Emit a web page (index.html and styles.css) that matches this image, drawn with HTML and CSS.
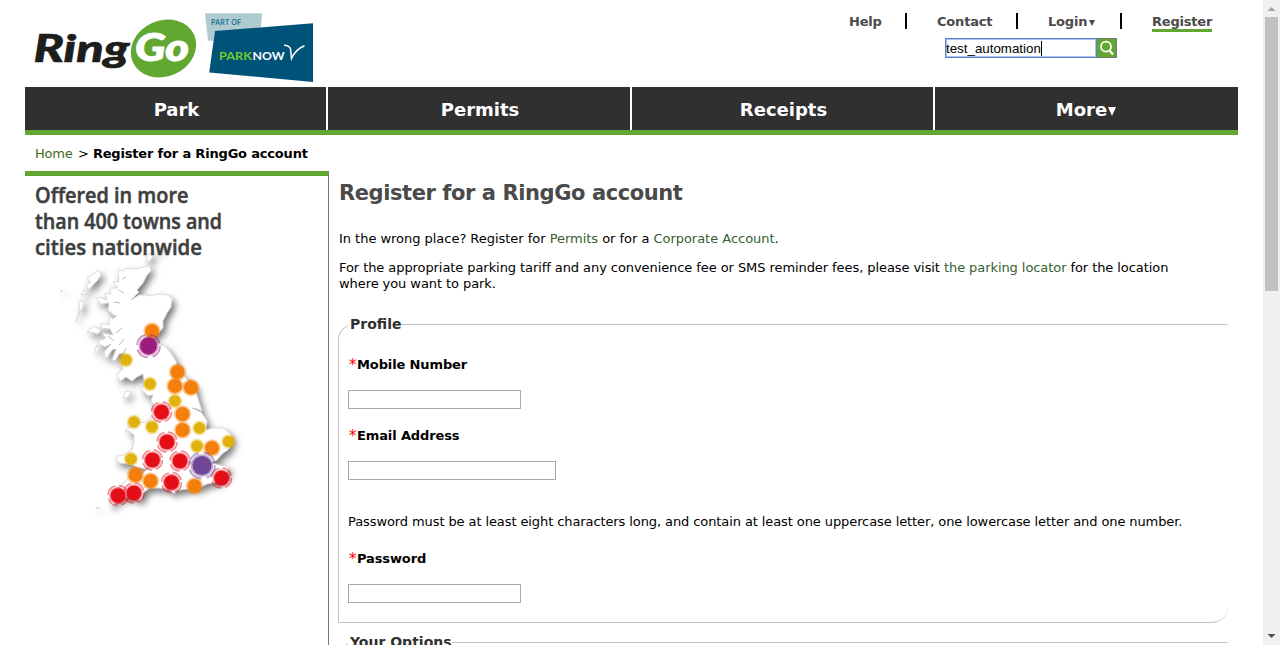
FILE: index.html
```html
<!DOCTYPE html>
<html lang="en">
<head>
<meta charset="utf-8">
<title>Register for a RingGo account</title>
<link rel="stylesheet" href="styles.css">
</head>
<body>
<div class="window">
  <div class="page">
    <header class="header">
      <svg class="logo" width="290" height="87" viewBox="25 0 290 87">
        <text class="logo-ring" x="33.500" y="61.700" textLength="96" lengthAdjust="spacingAndGlyphs">Ring</text>
        <ellipse cx="163.500" cy="48.500" rx="33.500" ry="28" fill="#62a830" transform="rotate(-24 163.500 48.500)"/>
        <text class="logo-go" x="135" y="60.700" textLength="54" lengthAdjust="spacingAndGlyphs">Go</text>
        <path d="M205 13.300L262 13.300L261 27.500L215 32L214 41L208 40.500Z" fill="#afcbd1"/>
        <path d="M215 31L313 23.300V82L209.200 72.500Z" fill="#005378"/>
        <text class="logo-part" x="211" y="24.500" textLength="30">PART OF</text>
        <text class="logo-park" x="219" y="59.500" textLength="33" lengthAdjust="spacingAndGlyphs">PARK</text>
        <text class="logo-now" x="252.500" y="59.500" textLength="32" lengthAdjust="spacingAndGlyphs">NOW</text>
        <path d="M284 45.300Q289.500 45.500 290.500 49L291.500 58.500Q296 49 304.500 45.800" fill="none" stroke="#fff" stroke-width="1.500"/>
      </svg>
      <div class="header-tools">
        <nav class="top-nav">
          <a class="top-link help">Help</a><a class="top-link contact">Contact</a><a class="top-link login">Login<span class="caret"></span></a><a class="top-link register"><span class="current">Register</span></a>
        </nav>
        <div class="search">
          <div class="search-field">test_automation<span class="cursor"></span></div>
          <div class="search-button"><svg width="19" height="18" viewBox="0 0 19 18"><circle cx="9" cy="7.700" r="5" fill="none" stroke="#fff" stroke-width="1.800"/><path d="M12.500 11.500L16 15.500" stroke="#fff" stroke-width="2.200"/></svg></div>
        </div>
      </div>
    </header>
    <nav class="main-nav">
      <a class="tab park">Park</a><a class="tab permits">Permits</a><a class="tab receipts">Receipts</a><a class="tab more">More<span class="caret caret-large"></span></a>
    </nav>
    <div class="crumbs"><a class="home">Home</a><span>&gt;</span><b class="here">Register for a RingGo account</b></div>
    <div class="columns">
      <aside class="sidebar">
        <svg class="map" width="303" height="360" viewBox="25 176 303 360">
          <defs>
            <filter id="shade" x="-20%" y="-20%" width="150%" height="150%"><feDropShadow dx="3" dy="4" stdDeviation="3.500" flood-color="#000" flood-opacity=".55"/></filter>
            <filter id="soft" x="-30%" y="-30%" width="160%" height="160%"><feGaussianBlur stdDeviation=".6"/></filter>
            <g id="small"><circle r="7.400" opacity=".35"/><circle r="5.800"/></g>
            <g id="medium"><circle r="8.700" opacity=".4"/><circle r="7"/></g>
            <g id="large"><circle r="10" fill="none" stroke="currentColor" stroke-width="1.500" opacity=".5" stroke-dasharray="12 4"/><circle r="8.700" opacity=".45"/><circle r="7.300"/></g>
          </defs>
          <g filter="url(#shade)" fill="#fff" stroke="#bbb" stroke-width=".5">
            <path d="M118 270L123 271L127 268L134 269L150 266L151 271L147 275L143 283L137 290L139 292L131 300L139 295L145 295L150 296L159 294L168 295L172 299L171 307L167 313L163 321L163 328L156 336L148 342L157 344L165 346L171 353L176 361L178 371L186 378L192 384L197 387L196 392L202 411L197 409L192 408L201 412L207 421L206 430L213 428L223 428L231 434L233 441L229 449L222 454L217 460L211 463L220 465L229 467L226 476L217 482L207 484L199 488L189 489L178 490L174 493L168 489L158 488L150 488L144 492L141 501L135 498L126 497L119 499L112 506L109 503L117 494L119 487L126 481L132 474L142 474L151 466L145 469L137 467L130 464L120 463L116 460L117 456L124 455L132 450L134 443L134 435L129 431L125 431L132 426L129 421L138 423L147 422L151 419L154 406L151 400L153 395L148 396L142 390L144 382L143 374L137 377L132 381L126 377L120 381L117 375L123 369L121 361L124 353L119 354L115 361L112 360L116 349L112 350L106 359L104 352L111 344L105 347L97 342L106 338L102 333L113 335L110 329L101 328L102 323L109 325L109 318L116 317L108 310L109 303L101 304L96 298L99 297L107 300L105 293L111 294L110 288L118 288L113 282L119 282Z"/>
            <path d="M99 270L101 275L97 281L92 286L88 290L86 285L91 282L87 278L92 275Z"/>
            <path d="M84 290L86 295L81 294ZM81 300L84 302L82 309L78 315L76 322L80 312L79 304ZM93 326L101 330L98 334L91 332L87 333ZM97 345L99 353L95 350ZM126 391L131 392L127 398L123 397ZM147 254L154 253L151 260L147 262ZM157 246L164 247L158 250ZM97 507L99 508L97 509ZM61 290L63 291L61 292Z"/>
          </g>
          <path d="M122 279L126 277M119 290L124 293M114 302L120 303M112 319L117 315M116 333L122 328M119 345L124 339M123 355L126 348M108 336L114 341" fill="none" stroke="#aaa" stroke-width=".8"/>
          <g filter="url(#soft)">
            <g fill="#e1b10b"><use href="#small" x="126" y="360"/><use href="#small" x="150" y="384"/><use href="#small" x="175" y="401"/><use href="#small" x="134" y="422"/><use href="#small" x="152" y="427"/><use href="#small" x="199.500" y="428"/><use href="#small" x="197" y="446"/><use href="#small" x="228.500" y="441.500"/><use href="#small" x="131" y="459"/></g>
            <g fill="#f57f09"><use href="#medium" x="152" y="331"/><use href="#medium" x="177.500" y="372"/><use href="#medium" x="175" y="386"/><use href="#medium" x="191" y="387.500"/><use href="#medium" x="182.500" y="414"/><use href="#medium" x="182.500" y="430"/><use href="#medium" x="212" y="448"/><use href="#medium" x="135.500" y="475"/><use href="#medium" x="150.500" y="481"/><use href="#medium" x="194.500" y="486"/></g>
            <g fill="#e50915" color="#e50915"><use href="#large" x="161.500" y="412"/><use href="#large" x="167" y="442"/><use href="#large" x="152.500" y="460"/><use href="#large" x="180" y="461"/><use href="#large" x="171.500" y="482.500"/><use href="#large" x="221.500" y="478"/><use href="#large" x="134" y="493"/><use href="#large" x="118" y="495.500"/></g>
            <g fill="#9b1f7b" color="#9b1f7b" transform="translate(148.500 346) scale(1.150)"><use href="#large"/></g>
            <g fill="#704798" color="#704798" transform="translate(202 465.500) scale(1.300)"><use href="#large"/></g>
          </g>
          <g class="map-title"><text x="35" y="203" textLength="153.500" lengthAdjust="spacingAndGlyphs">Offered in more</text><text x="35" y="229" textLength="187" lengthAdjust="spacingAndGlyphs">than 400 towns and</text><text x="35" y="255" textLength="167" lengthAdjust="spacingAndGlyphs">cities nationwide</text></g>
        </svg>
      </aside>
      <main class="content">
        <h1 class="title">Register for a RingGo account</h1>
        <p class="intro">In the wrong place? Register for <a>Permits</a> or for a <a>Corporate Account</a>.</p>
        <p class="intro tariff">For the appropriate parking tariff and any convenience fee or SMS reminder fees, please visit <a>the parking locator</a> for the location<br>where you want to park.</p>
        <fieldset class="group profile">
          <legend>Profile</legend>
          <label class="label"><i>*</i>Mobile Number</label>
          <div class="input"></div>
          <label class="label"><i>*</i>Email Address</label>
          <div class="input wide"></div>
          <p class="hint">Password must be at least eight characters long, and contain at least one uppercase letter, one lowercase letter and one number.</p>
          <label class="label"><i>*</i>Password</label>
          <div class="input"></div>
        </fieldset>
        <fieldset class="group options"><legend>Your Options</legend></fieldset>
      </main>
    </div>
  </div>
  <div class="scrollbar">
    <svg width="17" height="17"><path d="M4.500 11H12.500L8.500 7Z" fill="#a3a3a3"/></svg>
    <div class="thumb"></div>
    <svg class="down" width="17" height="17"><path d="M4.500 6H12.500L8.500 10Z" fill="#505050"/></svg>
  </div>
</div>
</body>
</html>
```
FILE: styles.css
```css
* { box-sizing: border-box; }
body { margin: 0; overflow: hidden; background: #fff; color: #000; font: 13px/16px Verdana, "DejaVu Sans", sans-serif; }
.window { display: flex; height: 645px; overflow: hidden; }
.page { width: 1263px; padding: 0 25px; overflow: hidden; }
.header { display: flex; justify-content: space-between; height: 87px; }
.logo { flex: none; }
.logo-ring, .logo-go { font: italic 900 37.5px Lato, sans-serif; }
.logo-ring { fill: #1d1d1b; stroke: #1d1d1b; stroke-width: .6px; }
.logo-go { fill: #fff; stroke: #fff; stroke-width: 1px; }
.logo-part { font: 700 7px Lato, sans-serif; fill: #21718f; }
.logo-park, .logo-now { font: 700 12px Lato, sans-serif; }
.logo-park { fill: #76c82b; }
.logo-now { fill: #fff; }
.header-tools { width: 414px; padding-top: 13px; }
.top-nav { display: flex; height: 25px; color: #4a4a4a; font-weight: 700; line-height: 18px; letter-spacing: -.2px; }
.top-link { height: 16px; border-right: 2px solid #000; white-space: nowrap; }
.help { width: 83px; padding-left: 25px; }
.contact { width: 111px; padding-left: 30px; }
.login { width: 104px; padding-left: 30px; }
.register { padding-left: 30px; border: 0; }
.current { display: block; width: 60px; height: 19px; border-bottom: 3px solid #62a830; }
.caret { display: inline-block; margin-left: 2px; border: solid transparent; border-width: 6px 3.5px 0; border-top-color: #4a4a4a; vertical-align: 0; }
.caret-large { margin-left: 1px; border-width: 9px 4.5px 0; border-top-color: #fff; }
.search { display: flex; width: 172px; height: 20px; margin-left: 121px; }
.search-field { width: 152px; border: 1px solid #5d82c0; box-shadow: inset 0 0 0 1px #a9c7f5; font: 13.33px/19px "Liberation Sans", Arial, sans-serif; white-space: nowrap; }
.cursor { display: inline-block; width: 1px; height: 15px; background: #000; vertical-align: -3px; }
.search-button { width: 20px; border: 1px solid #777; border-left: 0; background: #62a830; }
.search-button svg { display: block; }
.main-nav { display: grid; grid-template: 43px / 301px 302px 301px 303px; gap: 2px; height: 48px; border-bottom: 5px solid #62a830; color: #fff; font-size: 18px; font-weight: 700; line-height: 45px; text-align: center; }
.tab { height: 43px; background: #303030; }
.park, .permits, .receipts { padding-left: 2px; }
.more { padding-right: 1px; }
.crumbs { display: flex; gap: 5px; height: 36px; padding: 11px 10px 0; }
.home { width: 38px; letter-spacing: -.2px; }
.here { margin-left: -1px; letter-spacing: -.18px; }
.columns { display: flex; height: 474px; }
.sidebar { width: 304px; border-top: 5px solid #62a830; border-right: 1px solid #777; }
.map { display: block; }
.map-title { font: 600 21px "Open Sans", sans-serif; fill: #3e3e3e; stroke: #3e3e3e; stroke-width: .5px; }
.content { flex: 1; padding: 8px 10px 0 9px; }
.title { margin: 0 0 24px 1px; color: #4a4a4a; font-size: 21px; line-height: 28px; letter-spacing: -.42px; white-space: nowrap; }
.intro { margin: 0 0 13px 1px; letter-spacing: -.03px; white-space: nowrap; }
.tariff { letter-spacing: -.075px; }
a { color: inherit; }
.home { color: #42661b; }
.intro a { color: #36602f; }
.group { margin: 0; padding: 0 9px; border: 1px solid #c4c4c4; border-right-width: 0; border-radius: 16px 0; min-width: 0; }
.profile { height: 308px; margin-top: 23px; }
.group legend { padding: 0 0 0 2px; color: #303030; font-size: 14px; font-weight: 700; line-height: 18px; }
.label { display: block; height: 16px; margin: 24px 0 17px 1px; font-weight: 700; letter-spacing: -.12px; }
.label i { position: relative; top: 1px; display: inline-block; width: 8px; color: #f00; font-size: 15px; font-style: normal; font-weight: 400; line-height: 1; }
.input { width: 173px; height: 19px; border: 1px solid #a9a9a9; }
.wide { width: 208px; }
.input + .label { margin-top: 19px; }
.hint { margin: 34px 0 21px; letter-spacing: -.095px; white-space: nowrap; }
.hint + .label { margin-top: 0; }
.options { height: 100px; margin-top: 10px; }
.scrollbar { display: flex; flex-direction: column; width: 17px; background: #f0f0f0; }
.thumb { width: 13px; height: 274px; margin-left: 2px; background: #c1c1c1; }
.down { margin-top: auto; }
```
